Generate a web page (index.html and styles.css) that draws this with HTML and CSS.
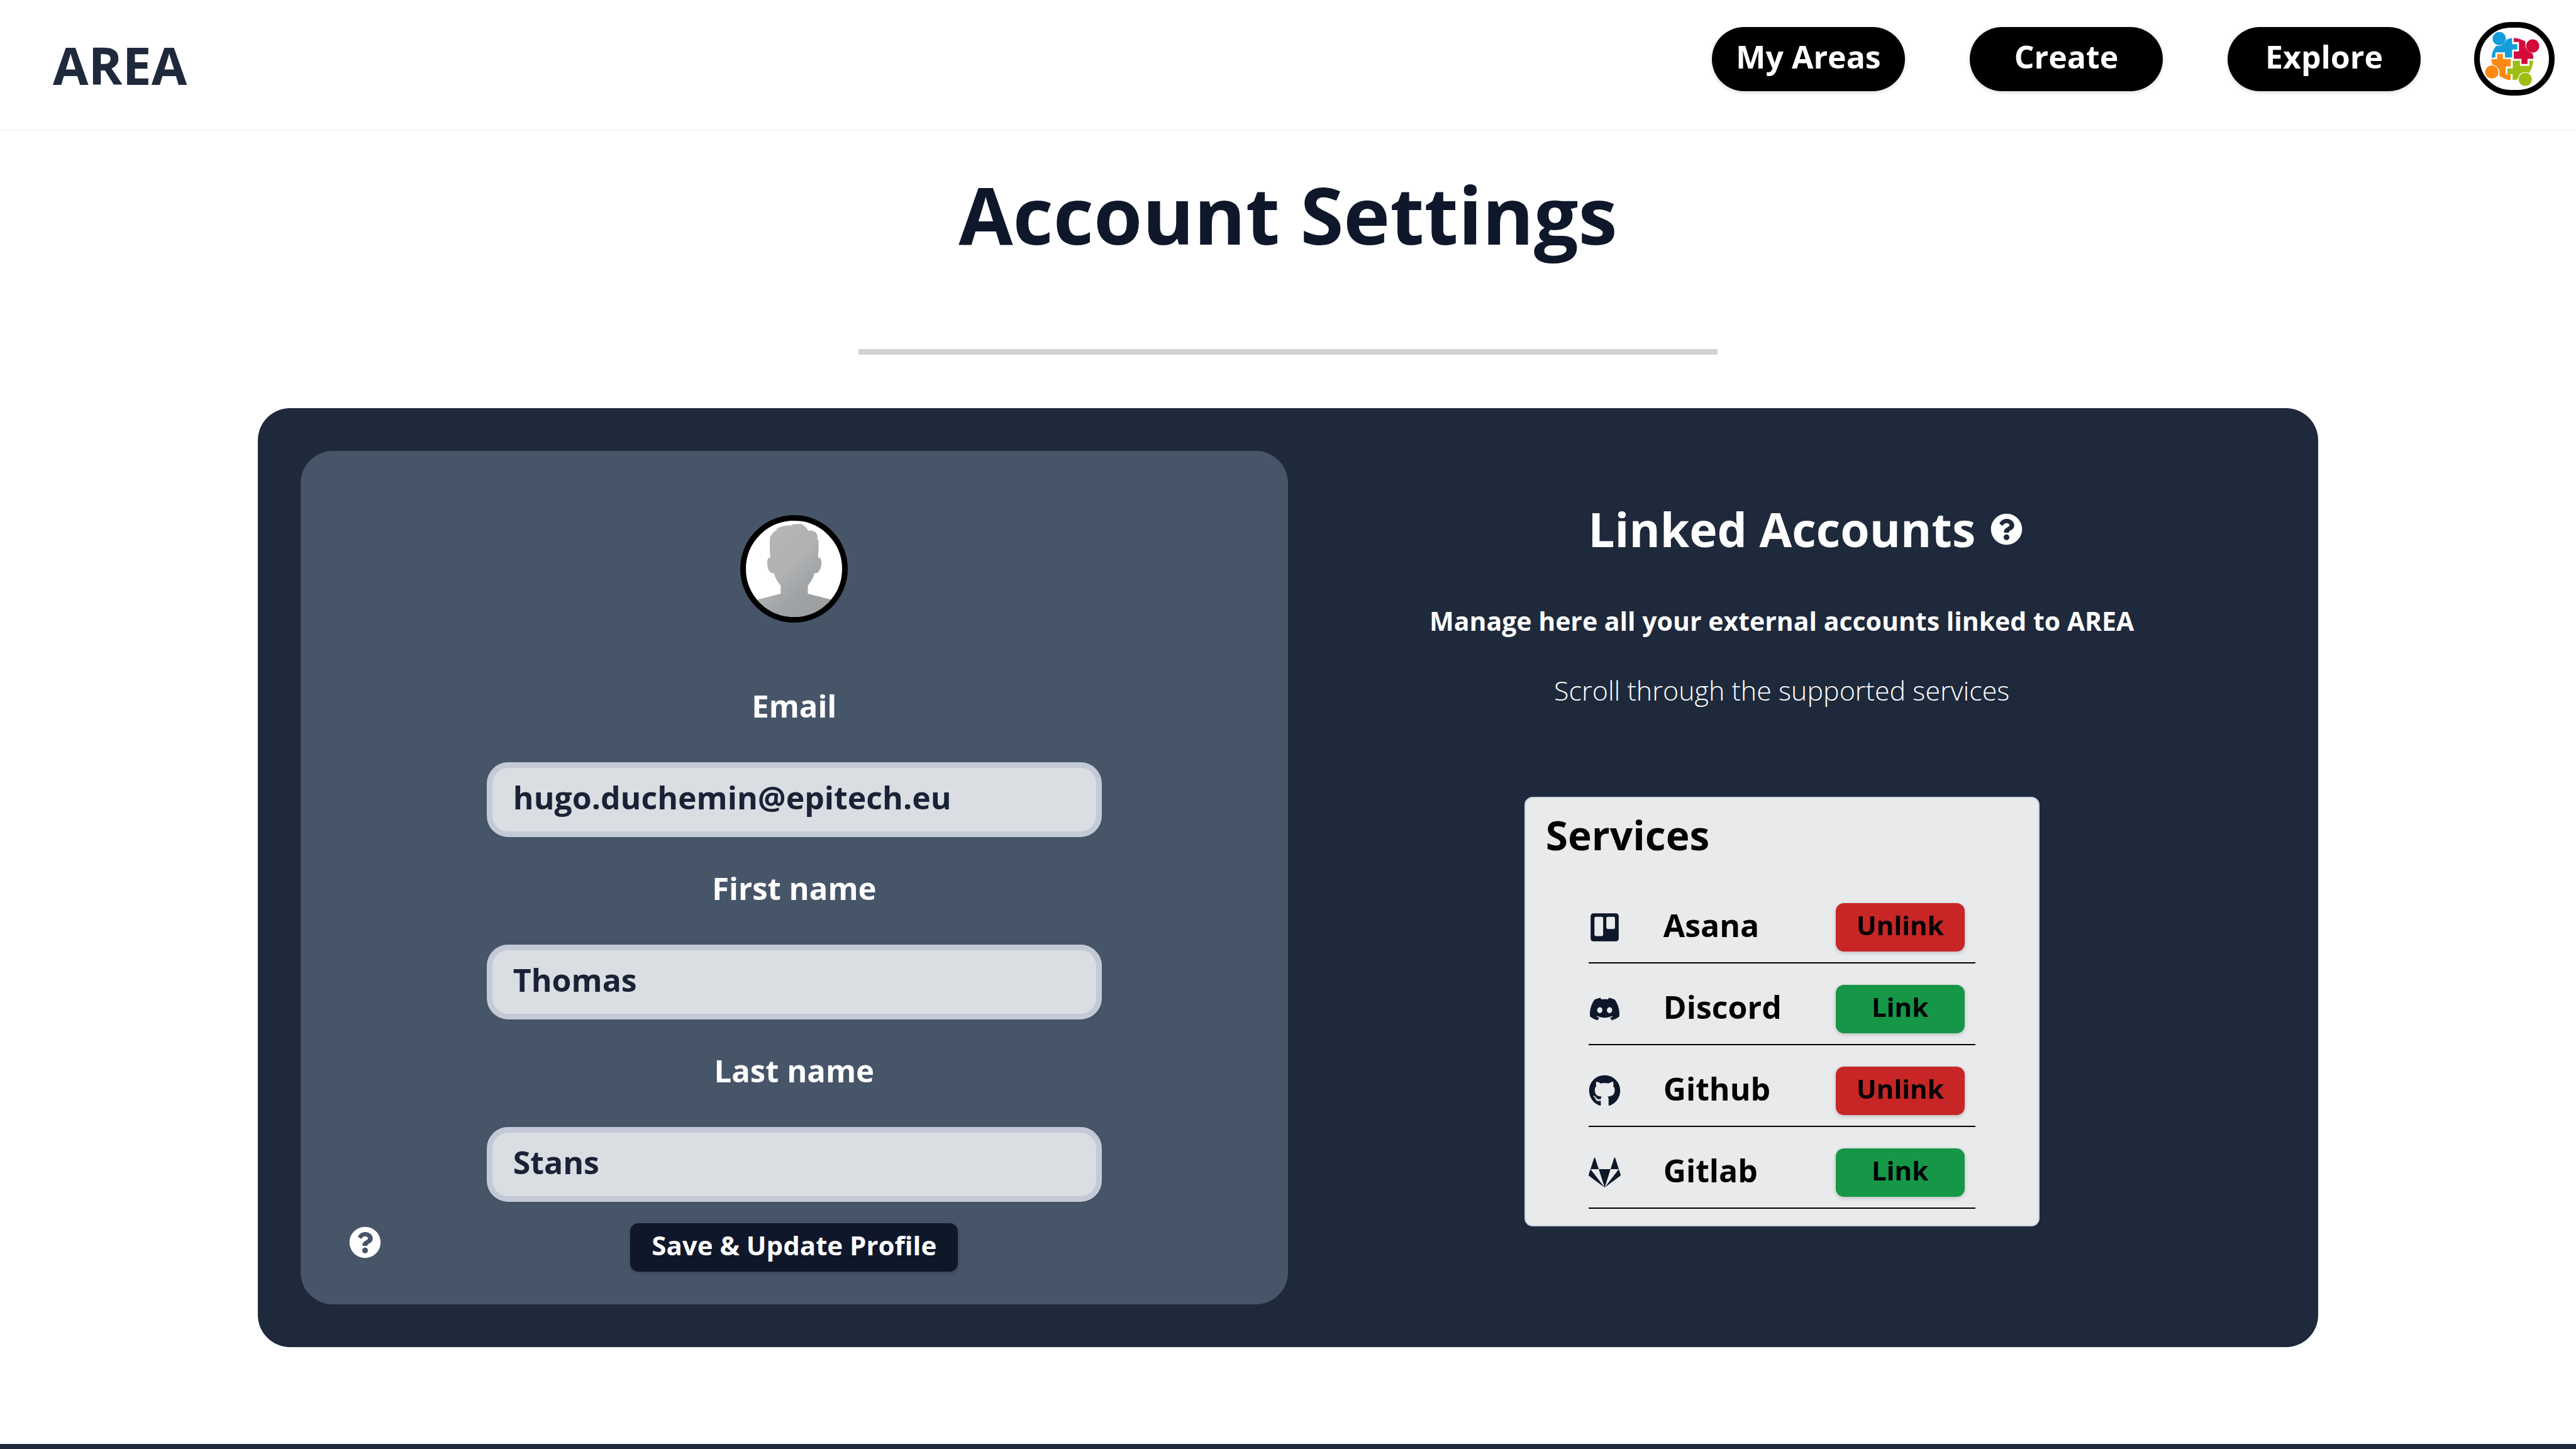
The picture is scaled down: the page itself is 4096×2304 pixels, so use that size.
FILE: index.html
```html
<!DOCTYPE html>
<html lang="en">
<head>
  <meta charset="utf-8">
  <meta name="viewport" content="width=device-width, initial-scale=1">
  <title>AREA - Account Settings</title>
  <link rel="stylesheet" href="styles.css">
</head>
<body>
  <header class="header">
    <a class="brand" href="#">AREA</a>
    <nav class="nav">
      <button class="nav-button" type="button">My Areas</button>
      <button class="nav-button" type="button">Create</button>
      <button class="nav-button" type="button">Explore</button>
      <a class="nav-avatar" href="#" aria-label="Profile">
        <svg viewBox="132 120 468 421" aria-hidden="true">
          <g fill="#149ddb">
            <circle cx="264" cy="194" r="45"/>
            <path d="M211 322Q214 275 243 243Q293 248 313 202Q330 190 351 190V232H386V268H351V322H302V287H238V322Z"/>
          </g>
          <g fill="#d40b3a">
            <circle cx="490" cy="244" r="45"/>
            <path d="M362 189Q408 192 442 215Q428 272 489 294Q495 310 495 331H455V366H414V331H362V280H397V217H362Z"/>
          </g>
          <g fill="#fc8a16">
            <circle cx="214" cy="420" r="45"/>
            <path d="M210 333H249V297H289V333H341V383H307V436H341V474Q300 472 263 444Q275 385 216 369Z"/>
          </g>
          <g fill="#9fbe15">
            <circle cx="440" cy="470" r="45"/>
            <path d="M355 343H404V378H467V343H494Q492 385 466 426Q400 404 388 470Q370 474 354 474V435H318V395H355Z"/>
          </g>
        </svg>
      </a>
    </nav>
  </header>

  <main class="main">
    <h1 class="title">Account Settings</h1>
    <hr class="divider">

    <div class="card">
      <form class="profile">
        <div class="portrait">
          <svg viewBox="144 132 648 648" role="img" aria-label="Profile picture">
            <defs>
              <linearGradient id="shade" x1="0" y1="0" x2="1" y2="1">
                <stop offset="0" stop-color="#b9b9b9"/>
                <stop offset=".45" stop-color="#b0b1b2"/>
                <stop offset=".65" stop-color="#9fa3a6"/>
                <stop offset="1" stop-color="#9b9b9c"/>
              </linearGradient>
            </defs>
            <path fill="url(#shade)" d="M378 568V623L220 663Q144 690 130 790H810Q800 690 716 662L561 623V570Q598 525 606 485Q628 488 642 462Q655 440 652 405Q649 380 630 379Q635 320 634 270Q628 250 620 243L628 248Q625 220 614 209Q590 192 566 201Q545 165 514 153L450 157L458 164Q400 155 342 191L362 190Q325 205 306 243Q302 310 309 379Q285 380 288 420Q288 440 296 462Q312 488 333 485Q342 527 378 568Z"/>
          </svg>
        </div>

        <label class="label" for="email">Email</label>
        <input class="input" id="email" type="email" value="hugo.duchemin@epitech.eu">
        <label class="label" for="first-name">First name</label>
        <input class="input" id="first-name" type="text" value="Thomas">
        <label class="label" for="last-name">Last name</label>
        <input class="input" id="last-name" type="text" value="Stans">

        <div class="actions">
          <button class="help" type="button" aria-label="Help about your profile">
            <svg class="icon" viewBox="0 0 512 512" aria-hidden="true"><use href="#question"/></svg>
          </button>
          <button class="button button-save" type="button">Save &amp; Update Profile</button>
        </div>
      </form>

      <section class="linked">
        <div class="linked-heading">
          <h2 class="linked-title">Linked Accounts</h2>
          <button class="help" type="button" aria-label="Help about linked accounts">
            <svg class="icon" viewBox="0 0 512 512" aria-hidden="true">
              <path id="question" d="M504 256c0 136.997-111.043 248-248 248S8 392.997 8 256C8 119.083 119.043 8 256 8s248 111.083 248 248zM262.655 90c-54.497 0-89.255 22.957-116.549 63.758-3.536 5.286-2.353 12.415 2.715 16.258l34.699 26.31c5.205 3.947 12.621 3.008 16.665-2.122 17.864-22.658 30.113-35.797 57.303-35.797 20.429 0 45.698 13.148 45.698 32.958 0 14.976-12.363 22.667-32.534 33.976C247.128 238.528 216 254.941 216 296v4c0 6.627 5.373 12 12 12h56c6.627 0 12-5.373 12-12v-1.333c0-28.462 83.186-29.647 83.186-106.667 0-58.002-60.165-102-116.531-102zM256 338c-25.365 0-46 20.635-46 46 0 25.364 20.635 46 46 46s46-20.636 46-46c0-25.364-20.635-46-46-46z"/>
            </svg>
          </button>
        </div>
        <p class="lead">Manage here all your external accounts linked to AREA</p>
        <p class="hint">Scroll through the supported services</p>

        <div class="services">
          <h3 class="services-title">Services</h3>
          <ul class="services-list">
            <li class="service">
              <svg class="icon" viewBox="-32 -32 512 512" aria-hidden="true">
                <path fill-rule="evenodd" d="M52 0H396Q448 0 448 52V396Q448 448 396 448H52Q0 448 0 396V52Q0 0 52 0ZM86 57Q61 57 61 82V340Q61 365 86 365H175Q200 365 200 340V82Q200 57 175 57ZM276 57Q251 57 251 82V226Q251 251 276 251H364Q389 251 389 226V82Q389 57 364 57Z"/>
              </svg>
              <span class="service-name">Asana</span>
              <button class="button button-unlink" type="button">Unlink</button>
            </li>
            <li class="service">
              <svg class="icon" viewBox="-0.7 -0.7 17.4 17.4" aria-hidden="true">
                <path d="M13.545 2.907a13.227 13.227 0 0 0-3.257-1.011.05.05 0 0 0-.052.025c-.141.25-.297.577-.406.833a12.19 12.19 0 0 0-3.658 0 8.258 8.258 0 0 0-.412-.833.051.051 0 0 0-.052-.025c-1.125.194-2.22.534-3.257 1.011a.041.041 0 0 0-.021.018C.356 6.024-.213 9.047.066 12.032c.001.014.01.028.021.037a13.276 13.276 0 0 0 3.995 2.02.05.05 0 0 0 .056-.019c.308-.42.582-.863.818-1.329a.05.05 0 0 0-.028-.07 8.875 8.875 0 0 1-1.248-.595.05.05 0 0 1-.005-.085c.084-.063.168-.129.248-.195a.05.05 0 0 1 .051-.007c2.619 1.196 5.454 1.196 8.041 0a.052.052 0 0 1 .053.007c.08.066.164.132.248.195a.051.051 0 0 1-.004.085 8.254 8.254 0 0 1-1.249.594.05.05 0 0 0-.027.07c.24.465.515.909.817 1.329a.05.05 0 0 0 .056.019 13.235 13.235 0 0 0 4.001-2.02.049.049 0 0 0 .021-.037c.334-3.451-.559-6.449-2.366-9.106a.034.034 0 0 0-.02-.019zM5.347 10.214c-.789 0-1.438-.724-1.438-1.612 0-.889.637-1.613 1.438-1.613.807 0 1.45.73 1.438 1.613 0 .888-.637 1.612-1.438 1.612zm5.316 0c-.788 0-1.438-.724-1.438-1.612 0-.889.637-1.613 1.438-1.613.807 0 1.451.73 1.438 1.613 0 .888-.631 1.612-1.438 1.612z"/>
              </svg>
              <span class="service-name">Discord</span>
              <button class="button button-link" type="button">Link</button>
            </li>
            <li class="service">
              <svg class="icon" viewBox="0 0 496 512" aria-hidden="true">
                <path d="M165.9 397.4c0 2-2.3 3.6-5.2 3.6-3.3.3-5.6-1.3-5.6-3.6 0-2 2.3-3.6 5.2-3.6 3-.3 5.6 1.3 5.6 3.6zm-31.1-4.5c-.7 2 1.3 4.3 4.3 4.9 2.6 1 5.6 0 6.2-2s-1.3-4.3-4.3-5.2c-2.6-.7-5.5.3-6.2 2.3zm44.2-1.7c-2.9.7-4.9 2.6-4.6 4.9.3 2 2.9 3.3 5.9 2.6 2.9-.7 4.9-2.6 4.6-4.6-.3-1.9-3-3.2-5.9-2.9zM244.8 8C106.1 8 0 113.3 0 252c0 110.9 69.8 205.8 169.5 239.2 12.8 2.3 17.3-5.6 17.3-12.1 0-6.2-.3-40.4-.3-61.4 0 0-70 15-84.7-29.8 0 0-11.4-29.1-27.8-36.6 0 0-22.9-15.7 1.6-15.4 0 0 24.9 2 38.6 25.8 21.9 38.6 58.6 27.5 72.9 20.9 2.3-16 8.8-27.1 16-33.7-55.9-6.2-112.3-14.3-112.3-110.5 0-27.5 7.6-41.3 23.6-58.9-2.6-6.5-11.1-33.3 2.6-67.9 20.9-6.5 69 27 69 27 20-5.6 41.5-8.5 62.8-8.5s42.8 2.9 62.8 8.5c0 0 48.1-33.6 69-27 13.7 34.7 5.2 61.4 2.6 67.9 16 17.7 25.8 31.5 25.8 58.9 0 96.5-58.9 104.2-114.8 110.5 9.2 7.9 17 22.9 17 46.4 0 33.7-.3 75.4-.3 83.6 0 6.5 4.6 14.4 17.3 12.1C428.2 457.8 496 362.9 496 252 496 113.3 383.5 8 244.8 8zM97.2 352.9c-1.3 1-1 3.3.7 5.2 1.6 1.6 3.9 2.3 5.2 1 1.3-1 1-3.3-.7-5.2-1.6-1.6-3.9-2.3-5.2-1zm-10.8-8.1c-.7 1.3.3 2.9 2.3 3.9 1.6 1 3.6.7 4.3-.7.7-1.3-.3-2.9-2.3-3.9-2-.6-3.6-.3-4.3.7zm32.4 35.6c-1.6 1.3-1 4.3 1.3 6.2 2.3 2.3 5.2 2.6 6.5 1 1.3-1.3.7-4.3-1.3-6.2-2.2-2.3-5.2-2.6-6.5-1zm-11.4-14.7c-1.6 1-1.6 3.6 0 5.9 1.6 2.3 4.3 3.3 5.6 2.3 1.6-1.3 1.6-3.9 0-6.2-1.4-2.3-4-3.3-5.6-2z"/>
              </svg>
              <span class="service-name">Github</span>
              <button class="button button-unlink" type="button">Unlink</button>
            </li>
            <li class="service">
              <svg class="icon" viewBox="0 0 512 512" aria-hidden="true">
                <path d="M105.2 24.9c-3.1-8.9-15.7-8.9-18.9 0L29.8 199.7h132c-.1 0-56.6-174.8-56.6-174.8zM.9 287.7c-2.6 8 .3 16.9 7.1 22l247.9 184-226.2-294zm160.8-88l94.3 294 94.3-294zm349.4 88l-28.8-88-226.3 294 247.9-184c6.9-5.1 9.7-14 7.2-22zM425.7 24.9c-3.1-8.9-15.7-8.9-18.9 0l-56.6 174.8h132z"/>
              </svg>
              <span class="service-name">Gitlab</span>
              <button class="button button-link" type="button">Link</button>
            </li>
          </ul>
        </div>
      </section>
    </div>
  </main>

  <footer class="footer"></footer>
</body>
</html>
```
FILE: styles.css
```css
* {
  box-sizing: border-box;
  margin: 0;
}

body {
  display: flex;
  flex-direction: column;
  min-height: 100vh;
  background: #fff;
  color: #0f172a;
  font-family: "Open Sans", "Noto Sans", sans-serif;
  font-size: 50px;
  font-weight: 700;
}

button,
input {
  border: 0;
  font: inherit;
}

.icon {
  display: block;
  width: 51px;
  height: 51px;
  fill: currentColor;
}

/* Top bar */

.header {
  display: flex;
  align-items: flex-start;
  justify-content: space-between;
  padding: 35px 34px 34px 84px;
  box-shadow: 0 2px 4px rgba(0, 0, 0, 0.05);
}

.brand {
  color: #1e293b;
  font-size: 82px;
  line-height: 136px;
  text-decoration: none;
}

.nav {
  display: flex;
  align-items: center;
  gap: 103px;
}

.nav-button {
  width: 307px;
  height: 102px;
  padding: 0 0 8px;
  border-radius: 51px;
  background: #000;
  box-shadow: 0 2px 6px rgba(0, 0, 0, 0.15);
  color: #fff;
}

.nav-avatar {
  width: 128px;
  height: 117px;
  margin-left: -18px;
  border: 9px solid #000;
  border-radius: 59px;
  overflow: hidden;
}

.nav-avatar svg {
  display: block;
  width: 100%;
  height: 100%;
}

/* Page */

.main {
  display: flex;
  flex: 1;
  flex-direction: column;
  align-items: center;
  padding: 68px 0 153px;
}

.title {
  font-size: 125px;
  line-height: 136px;
}

.divider {
  width: 33.33%;
  height: 9px;
  margin: 146px 0 85px;
  border: 0;
  background: #d1d2d6;
}

.card {
  display: grid;
  grid-template-columns: 1fr 1fr;
  width: 80%;
  padding: 68px;
  border-radius: 51px;
  background: #1e293b;
  color: #fff;
}

/* Profile form */

.profile {
  display: flex;
  flex-direction: column;
  align-items: center;
  padding: 102px 0 52px;
  border-radius: 51px;
  background: #475569;
}

.portrait {
  width: 171px;
  height: 171px;
  margin-bottom: 51px;
  border: 9px solid #000;
  border-radius: 50%;
  background: #fff;
  overflow: hidden;
}

.portrait svg {
  display: block;
}

.label {
  margin: 46px 0 55px;
  font-size: 49px;
  line-height: 70px;
}

.input {
  width: 978px;
  max-width: 100%;
  height: 119px;
  padding: 0 33px 8px;
  border: 9px solid #c4c9d6;
  border-radius: 34px;
  background: #dadde2;
  box-shadow: 0 2px 4px rgba(0, 0, 0, 0.05);
  color: #1a2236;
}

.actions {
  display: grid;
  grid-template-columns: 1fr auto 1fr;
  align-items: start;
  width: 100%;
  margin-top: 34px;
  padding: 0 77px;
}

.help {
  justify-self: start;
  padding: 5px 0;
  background: none;
  color: #fff;
}

.button {
  height: 77px;
  padding: 0 34px 8px;
  border-radius: 13px;
  box-shadow: 0 2px 6px rgba(0, 0, 0, 0.2);
  font-size: 42px;
  line-height: 60px;
}

.button-save {
  background: #0f172a;
  color: #fff;
}

/* Linked accounts */

.linked {
  display: flex;
  flex-direction: column;
  align-items: center;
  padding-top: 74px;
}

.linked-heading {
  display: grid;
  grid-template-columns: 1fr auto 1fr;
  align-items: center;
  column-gap: 24px;
  width: 100%;
}

.linked-title {
  grid-column: 2;
  font-size: 75px;
  line-height: 100px;
}

.lead {
  margin-top: 66px;
  font-size: 41px;
  line-height: 60px;
}

.hint {
  margin-top: 51px;
  font-size: 43px;
  font-weight: 300;
  line-height: 60px;
}

.services {
  width: 819px;
  max-width: 100%;
  margin-top: 139px;
  padding: 18px 100px 26px;
  border: 2px solid #cbd5e1;
  border-radius: 13px;
  background: #e9eaec;
  color: #020305;
}

.services-title {
  margin: 0 0 33px -68px;
  font-size: 64px;
  line-height: 82px;
}

.services-list {
  padding: 0;
  list-style: none;
}

.service {
  display: grid;
  grid-template-columns: 51px 1fr 205px;
  align-items: center;
  column-gap: 68px;
  padding: 34px 17px 17px 0;
  border-bottom: 2px solid #020305;
}

.service .icon {
  color: #0f172a;
}

.service-name {
  padding-bottom: 8px;
  line-height: 60px;
}

.service .button {
  padding: 0 0 8px;
  color: #020305;
}

.button-unlink {
  background: #c82626;
}

.button-link {
  background: #169747;
}

.footer {
  height: 8px;
  background: #1e293b;
}
```
